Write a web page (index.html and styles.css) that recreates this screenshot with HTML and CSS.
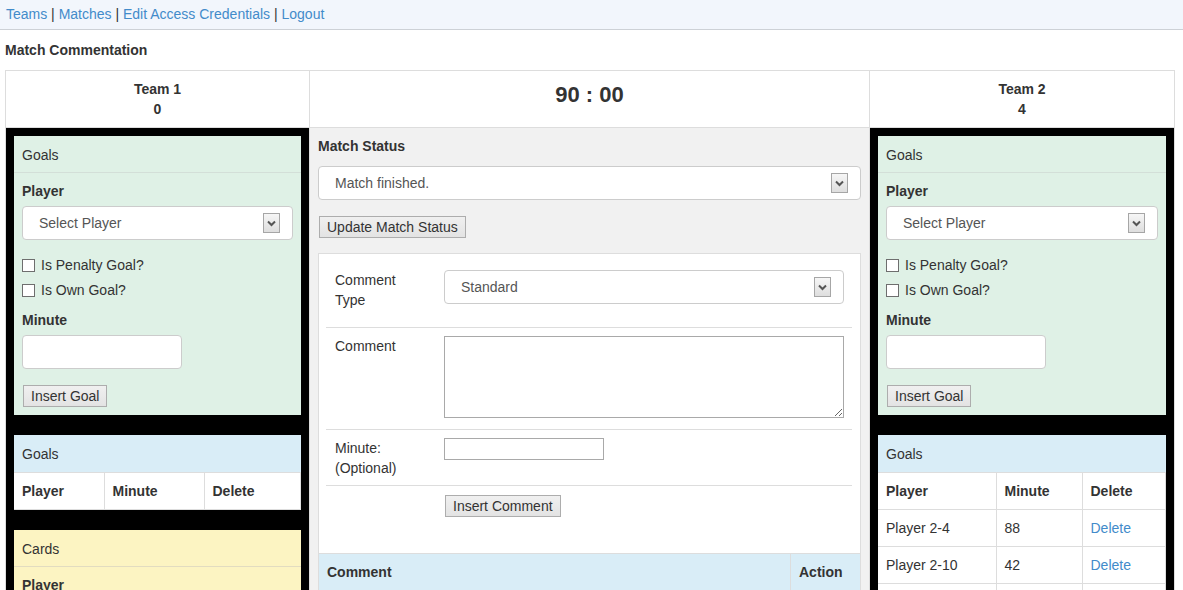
FILE: index.html
```html
<!DOCTYPE html>
<html>
<head>
<meta charset="utf-8">
<title>Match Commentation</title>
<link rel="stylesheet" href="styles.css">
</head>
<body>
<nav class="topnav"><a href="#">Teams</a> | <a href="#">Matches</a> | <a href="#">Edit Access Credentials</a> | <a href="#">Logout</a></nav>
<main class="page">
  <h5 class="page-title">Match Commentation</h5>
  <div class="board">
    <div class="cell head-team"><div>Team 1</div><div>0</div></div>
    <div class="cell head-clock">90 : 00</div>
    <div class="cell head-team"><div>Team 2</div><div>4</div></div>

    <!-- Team 1 column -->
    <div class="cell team-col">
      <section class="panel panel-success">
        <div class="panel-heading">Goals</div>
        <div class="panel-body">
          <label class="lbl">Player</label>
          <div class="form-group">
            <div class="select">Select Player<span class="arrow"><svg width="15" height="18" viewBox="0 0 15 18"><path d="M4 7.5 L7.5 11 L11 7.5" fill="none" stroke="#555" stroke-width="2"/></svg></span></div>
          </div>
          <label class="check"><input type="checkbox" class="cbox">Is Penalty Goal?</label>
          <label class="check last"><input type="checkbox" class="cbox">Is Own Goal?</label>
          <label class="lbl">Minute</label>
          <div class="form-group gap16"><input type="text" class="text-input"></div>
          <button class="btn">Insert Goal</button>
        </div>
      </section>

      <section class="panel panel-info">
        <div class="panel-heading">Goals</div>
        <table class="gtable">
          <colgroup><col class="c-l1"><col class="c-l2"><col></colgroup>
          <tr><th>Player</th><th>Minute</th><th>Delete</th></tr>
        </table>
      </section>

      <section class="panel panel-warning">
        <div class="panel-heading">Cards</div>
        <div class="panel-body">
          <label class="lbl">Player</label>
          <div class="form-group">
            <div class="select">Select Player<span class="arrow"><svg width="15" height="18" viewBox="0 0 15 18"><path d="M4 7.5 L7.5 11 L11 7.5" fill="none" stroke="#555" stroke-width="2"/></svg></span></div>
          </div>
          <label class="lbl">Minute</label>
          <div class="form-group gap16"><input type="text" class="text-input"></div>
          <button class="btn">Insert Card</button>
        </div>
      </section>
    </div>

    <!-- Center column -->
    <div class="cell center-col">
      <label class="lbl mb10">Match Status</label>
      <div class="select mb16">Match finished.<span class="arrow"><svg width="15" height="18" viewBox="0 0 15 18"><path d="M4 7.5 L7.5 11 L11 7.5" fill="none" stroke="#555" stroke-width="2"/></svg></span></div>
      <button class="btn mb15">Update Match Status</button>

      <div class="cpanel">
        <div class="crow first">
          <div class="clabel">Comment<br>Type</div>
          <div class="cctl"><div class="select mb15">Standard<span class="arrow"><svg width="15" height="18" viewBox="0 0 15 18"><path d="M4 7.5 L7.5 11 L11 7.5" fill="none" stroke="#555" stroke-width="2"/></svg></span></div></div>
        </div>
        <div class="crow">
          <div class="clabel">Comment</div>
          <div class="cctl"><textarea class="textarea"></textarea></div>
        </div>
        <div class="crow tight">
          <div class="clabel">Minute:<br>(Optional)</div>
          <div class="cctl"><input type="text" class="small-input"></div>
        </div>
        <div class="crow btnrow">
          <div class="clabel"></div>
          <div class="cctl"><button class="btn mb15">Insert Comment</button></div>
        </div>
      </div>
      <table class="ctable">
        <tr><th>Comment</th><th class="action">Action</th></tr>
        <tr><td>Match finished.</td><td><a href="#">Delete</a></td></tr>
      </table>
    </div>

    <!-- Team 2 column -->
    <div class="cell team-col">
      <section class="panel panel-success">
        <div class="panel-heading">Goals</div>
        <div class="panel-body">
          <label class="lbl">Player</label>
          <div class="form-group">
            <div class="select">Select Player<span class="arrow"><svg width="15" height="18" viewBox="0 0 15 18"><path d="M4 7.5 L7.5 11 L11 7.5" fill="none" stroke="#555" stroke-width="2"/></svg></span></div>
          </div>
          <label class="check"><input type="checkbox" class="cbox">Is Penalty Goal?</label>
          <label class="check last"><input type="checkbox" class="cbox">Is Own Goal?</label>
          <label class="lbl">Minute</label>
          <div class="form-group gap16"><input type="text" class="text-input"></div>
          <button class="btn">Insert Goal</button>
        </div>
      </section>

      <section class="panel panel-info">
        <div class="panel-heading">Goals</div>
        <table class="gtable">
          <colgroup><col class="c-r1"><col class="c-r2"><col></colgroup>
          <tr><th>Player</th><th>Minute</th><th>Delete</th></tr>
          <tr><td>Player 2-4</td><td>88</td><td><a href="#">Delete</a></td></tr>
          <tr><td>Player 2-10</td><td>42</td><td><a href="#">Delete</a></td></tr>
          <tr><td>Player 2-7</td><td>30</td><td><a href="#">Delete</a></td></tr>
          <tr><td>Player 2-2</td><td>12</td><td><a href="#">Delete</a></td></tr>
        </table>
      </section>
    </div>
  </div>
</main>
</body>
</html>
```

FILE: styles.css
```css
* { box-sizing: border-box; }

body {
  margin: 0;
  font-family: "Liberation Sans", Arial, sans-serif;
  font-size: 14px;
  line-height: 20px;
  color: #333;
  background: #fff;
}

a { color: #428bca; text-decoration: none; }

.topnav {
  height: 30px;
  padding: 4px 6px 5px;
  background: #f2f6fc;
  border-bottom: 1px solid #cdd1d6;
}

.page { padding: 0 5px; }

.page-title {
  margin: 10px 0;
  font-size: 14px;
  line-height: 20px;
  font-weight: bold;
}

.board {
  display: grid;
  grid-template-columns: 303px 559px 304px;
  gap: 1px;
  width: 1170px;
  background: #ddd;
  border: 1px solid #ddd;
}

.cell { background: #fff; padding: 8px; }

.head-team { text-align: center; font-weight: bold; }

.head-clock {
  text-align: center;
  font-weight: bold;
  font-size: 22px;
  line-height: 32px;
}

.team-col { background: #000; }
.center-col { background: #f1f1f1; }

/* panels */
.panel { margin-bottom: 20px; }
.panel-heading {
  padding: 9px 8px 7px;
  line-height: 20px;
  border-bottom: 1px solid #d3dfd8;
}
.panel-body { padding: 8px; }
.panel-success { background: #dff1e6; }
.panel-info { background: #d9edf7; }
.panel-info .panel-heading { border-bottom-color: #d9edf7; }
.panel-warning { background: #fcf4c2; }
.panel-warning .panel-heading { border-bottom-color: #e2dcc0; }

.lbl { display: block; font-weight: bold; margin-bottom: 5px; }
.mb10 { margin-bottom: 10px; }
.mb15 { margin-bottom: 15px; }
.mb16 { margin-bottom: 16px; }

.form-group { margin-bottom: 15px; }
.form-group.gap16 { margin-bottom: 16px; }

.select {
  position: relative;
  height: 34px;
  padding: 6px 16px;
  line-height: 20px;
  color: #555;
  background: #fff;
  border: 1px solid #ccc;
  border-radius: 4px;
}
.select .arrow {
  position: absolute;
  right: 12px;
  top: 6px;
  width: 17px;
  height: 20px;
  border: 1px solid #a6a6a6;
  background: linear-gradient(#f6f6f6, #dedede);
  display: flex;
  align-items: center;
  justify-content: center;
}
.select .arrow svg { display: block; }

.check {
  display: flex;
  align-items: center;
  height: 20px;
  margin-bottom: 5px;
}
.check.last { margin-bottom: 10px; }
.cbox {
  appearance: none;
  -webkit-appearance: none;
  width: 13px;
  height: 13px;
  margin: 1px 6px 0 0;
  border: 1px solid #6e6e6e;
  background: #fff;
  border-radius: 0;
}

.text-input {
  display: block;
  width: 160px;
  height: 34px;
  border: 1px solid #ccc;
  border-radius: 4px;
  background: #fff;
}

.btn {
  display: block;
  height: 22px;
  padding: 1px 7px 0;
  font-family: "Liberation Sans", Arial, sans-serif;
  font-size: 14px;
  line-height: 19px;
  color: #333;
  background: linear-gradient(#f0f0f0, #e3e3e3);
  border: 1px solid #adadad;
  border-radius: 0;
  margin-left: 1px;
}

/* tables */
.gtable, .ctable {
  width: 100%;
  border-collapse: collapse;
  background: #fff;
}
.gtable { table-layout: fixed; }
.c-l1 { width: 90px; }
.c-l2 { width: 100px; }
.c-r1 { width: 118px; }
.c-r2 { width: 86px; }
.gtable th, .gtable td, .ctable th, .ctable td {
  padding: 8px;
  line-height: 20px;
  text-align: left;
  border: 1px solid #ddd;
}
.gtable tr > :first-child { border-left: none; }
.gtable th { font-weight: bold; }

.ctable th { background: #d9edf7; font-weight: bold; }
.ctable .action { width: 70px; }

/* comment form */
.cpanel {
  background: #fff;
  border: 1px solid #ddd;
  border-bottom: none;
  padding: 8px 8px 13px 7px;
}
.crow {
  display: grid;
  grid-template-columns: 110px 1fr;
  border-top: 1px solid #ddd;
}
.crow.first { border-top: none; }
.clabel { padding: 8px 8px 8px 9px; }
.cctl { padding: 8px; }
.crow.tight .clabel { padding-bottom: 7px; }
.crow.btnrow .cctl { padding-top: 9px; }

.textarea {
  display: block;
  width: 100%;
  height: 82px;
  margin: 0 0 3px;
  border: 1px solid #a9a9a9;
  resize: vertical;
  font-family: "Liberation Sans", Arial, sans-serif;
}

.small-input {
  display: block;
  width: 160px;
  height: 22px;
  border: 1px solid #a9a9a9;
  background: #fff;
}
```
